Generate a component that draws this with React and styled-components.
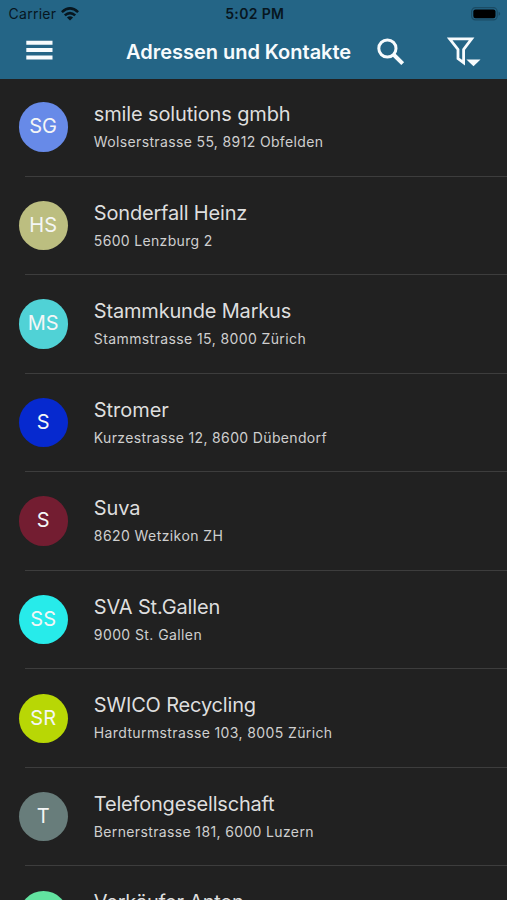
import React from "react";
import styled, { createGlobalStyle } from "styled-components";

const Global = createGlobalStyle`
  body { margin: 0; background: #212121; }
`;

const Screen = styled.main`
  width: 507px;
  height: 900px;
  overflow: hidden;
  display: flex;
  flex-direction: column;
  background: #212121;
  font-family: Inter, "Liberation Sans", sans-serif;
`;

const Header = styled.header`
  flex: none;
  height: 79px;
  box-sizing: border-box;
  background: #246586;
`;

const StatusBar = styled.div`
  height: 27px;
  padding: 0 6px 0 8.6px;
  display: grid;
  grid-template-columns: 1fr auto 1fr;
  align-items: center;
  color: #07161f;
  font-size: 14px;
  line-height: 27px;
`;

const Carrier = styled.div`
  display: flex;
  align-items: center;
  gap: 5px;
  letter-spacing: 0.25px;
`;

const Clock = styled.time`
  font-weight: 600;
  letter-spacing: 0.35px;
`;

const Battery = styled.svg`
  justify-self: end;
  display: block;
`;

const Toolbar = styled.div`
  height: 50px;
  display: flex;
  align-items: center;
  padding: 0 26px;
`;

const IconButton = styled.button`
  display: block;
  flex: none;
  padding: 0 0 ${(p) => p.$lift || 0}px;
  border: 0;
  background: none;
  color: #f7fbfd;
  margin-left: ${(p) => p.$gap || 0}px;

  svg {
    display: block;
  }
`;

const Title = styled.h1`
  flex: none;
  width: 226px;
  margin: 0 0 0 73px;
  color: #f7fbfd;
  font-size: 20px;
  font-weight: 600;
  line-height: 50px;
  letter-spacing: -0.02px;
  white-space: nowrap;
`;

const List = styled.ul`
  margin: -0.6px 0 0;
  padding: 0;
  list-style: none;
`;

const Row = styled.li`
  height: 98.55px;
  display: flex;
  padding-left: 19px;
  box-sizing: border-box;
  background: linear-gradient(#3d3d3d, #3d3d3d) 25px 100% / 100% 1.4px no-repeat;
`;

const Avatar = styled.div`
  flex: none;
  width: 49.3px;
  height: 49.3px;
  margin-top: 23.9px;
  border-radius: 50%;
  background: ${(p) => p.$color};
  color: #f4f6f6;
  font-size: 20px;
  line-height: 49.3px;
  text-align: center;
  text-indent: -1px;
`;

const Details = styled.div`
  padding: 22.6px 0 0 25.5px;
`;

const Name = styled.div`
  color: #dedede;
  font-size: 20px;
  line-height: 26px;
  letter-spacing: ${(p) => p.$spacing}px;
  white-space: nowrap;
`;

const Address = styled.div`
  margin-top: 4px;
  color: #cfcfcf;
  font-size: 14px;
  line-height: 22px;
  letter-spacing: ${(p) => p.$spacing}px;
  white-space: nowrap;
`;

const contacts = [
  { initials: "SG", color: "#678ae8", name: "smile solutions gmbh", ns: -0.14, address: "Wolserstrasse 55, 8912 Obfelden", as: 0.36 },
  { initials: "HS", color: "#bcbe80", name: "Sonderfall Heinz", ns: -0.18, address: "5600 Lenzburg 2", as: 0.33 },
  { initials: "MS", color: "#50d2d6", name: "Stammkunde Markus", ns: -0.18, address: "Stammstrasse 15, 8000 Zürich", as: 0.4 },
  { initials: "S", color: "#0629cf", name: "Stromer", ns: -0.04, address: "Kurzestrasse 12, 8600 Dübendorf", as: 0.35 },
  { initials: "S", color: "#731d31", name: "Suva", ns: -0.1, address: "8620 Wetzikon ZH", as: 0.42 },
  { initials: "SS", color: "#27ebea", name: "SVA St.Gallen", ns: -0.15, address: "9000 St. Gallen", as: 0.41 },
  { initials: "SR", color: "#b8d705", name: "SWICO Recycling", ns: -0.18, address: "Hardturmstrasse 103, 8005 Zürich", as: 0.38 },
  { initials: "T", color: "#687d7b", name: "Telefongesellschaft", ns: -0.19, address: "Bernerstrasse 181, 6000 Luzern", as: 0.36 },
  { initials: "", color: "#62e3a0", name: "Verkäufer Anton", ns: -0.26, address: "", as: 0 },
];

function Wifi() {
  return (
    <svg width="18" height="14" viewBox="0 0 18 14" fill="none" stroke="#07161f" strokeWidth="2.6">
      <path d="M0.9 5.1Q9 -2.2 17.1 5.1" />
      <path d="M3.8 8.4Q9 3.7 14.2 8.4" />
      <path d="M9 13.6L5.9 10.5Q9 7.9 12.1 10.5Z" fill="#07161f" stroke="none" />
    </svg>
  );
}

export default function App() {
  return (
    <Screen>
      <Global />
      <Header>
        <StatusBar>
          <Carrier>
            Carrier
            <Wifi />
          </Carrier>
          <Clock>5:02 PM</Clock>
          <Battery width="31" height="16" viewBox="0 0 31 16">
            <rect x="1.6" y="1.7" width="25.6" height="12.2" rx="3.8" fill="none" stroke="#1b4c65" strokeWidth="1.2" />
            <rect x="3.3" y="3.4" width="22.2" height="8.8" rx="2.2" fill="#000" />
            <path d="M28.6 5.8Q30.2 6.4 30.2 7.8Q30.2 9.2 28.6 9.8Z" fill="#1b4c65" />
          </Battery>
        </StatusBar>
        <Toolbar>
          <IconButton aria-label="Menü" $lift={4}>
            <svg width="27" height="20" viewBox="0 0 27 20" fill="currentColor">
              <path d="M0.3 0.7H26.5V4.7H0.3ZM0.3 8.1H26.5V12.1H0.3ZM0.3 15.5H26.5V19.5H0.3Z" />
            </svg>
          </IconButton>
          <Title>Adressen und Kontakte</Title>
          <IconButton aria-label="Suchen" $gap={24}>
            <svg width="30" height="30" viewBox="0 0 30 30" fill="none" stroke="currentColor">
              <circle cx="11.4" cy="11.5" r="8.6" strokeWidth="3" />
              <path d="M17.5 17.5L26.7 26.7" strokeWidth="4" />
            </svg>
          </IconButton>
          <IconButton aria-label="Filtern" $gap={41} $lift={1}>
            <svg width="34" height="32" viewBox="0 0 34 32">
              <path d="M2.6 2.9H24.6L16.6 13.5V26.7L11 22.5V13.5Z" fill="none" stroke="currentColor" strokeWidth="2.8" />
              <path d="M19.4 23.5H33.5L26.5 30.3Z" fill="currentColor" />
            </svg>
          </IconButton>
        </Toolbar>
      </Header>
      <List>
        {contacts.map((c) => (
          <Row key={c.name}>
            <Avatar $color={c.color}>{c.initials}</Avatar>
            <Details>
              <Name $spacing={c.ns}>{c.name}</Name>
              <Address $spacing={c.as}>{c.address}</Address>
            </Details>
          </Row>
        ))}
      </List>
    </Screen>
  );
}
